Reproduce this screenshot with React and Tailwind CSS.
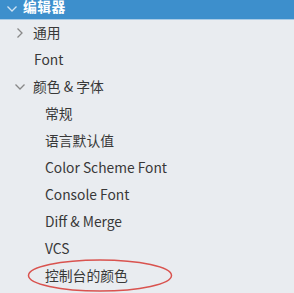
import React from "react";

const ChevronRight = ({ className }) => (
  <svg className={className} width="8" height="12" viewBox="0 0 8 12" fill="none">
    <path d="M1.5 1.5 L6 6 L1.5 10.5" stroke="currentColor" strokeWidth="1.3" />
  </svg>
);
const ChevronDown = ({ className }) => (
  <svg className={className} width="12" height="8" viewBox="0 0 12 8" fill="none">
    <path d="M1.5 1.5 L6 6 L10.5 1.5" stroke="currentColor" strokeWidth="1.3" />
  </svg>
);

const font = { fontFamily: '"Noto Sans CJK SC", "Noto Sans", sans-serif' };

export default function App() {
  const children = ["常规", "语言默认值", "Color Scheme Font", "Console Font", "Diff & Merge", "VCS", "控制台的颜色"];
  return (
    <div className="w-[294px] h-[293px] overflow-hidden bg-[#e9ecf0] text-[#383838] text-[13.8px] relative" style={font}>
      <div className="h-[20px] bg-[#3d8fcc] border-b border-[#a9cbe6] flex items-end text-white">
        <ChevronDown className="ml-[6px] mb-[6px] text-[#cfe3f3]" />
        <span className="ml-[5px] leading-[26px] font-bold tracking-[0.5px]">编辑器</span>
      </div>
      <div className="flex flex-col">
        <div className="h-[27px] flex items-center mt-[-1px]">
          <ChevronRight className="ml-[16px] text-[#888]" />
          <span className="ml-[9px]">通用</span>
        </div>
        <div className="h-[27px] flex items-center">
          <span className="ml-[34px]">Font</span>
        </div>
        <div className="h-[27px] flex items-center">
          <ChevronDown className="ml-[14px] text-[#888]" />
          <span className="ml-[7px]">颜色 &amp; 字体</span>
        </div>
        {children.map((c) => (
          <div key={c} className="h-[27px] flex items-center">
            <span className="ml-[45px]">{c}</span>
          </div>
        ))}
      </div>
      <svg className="absolute left-[27px] top-[258px]" width="146" height="35" viewBox="0 0 146 35" fill="none">
        <ellipse cx="73" cy="17.5" rx="71.5" ry="15.5" stroke="#d9534f" strokeWidth="1.5" />
      </svg>
    </div>
  );
}
